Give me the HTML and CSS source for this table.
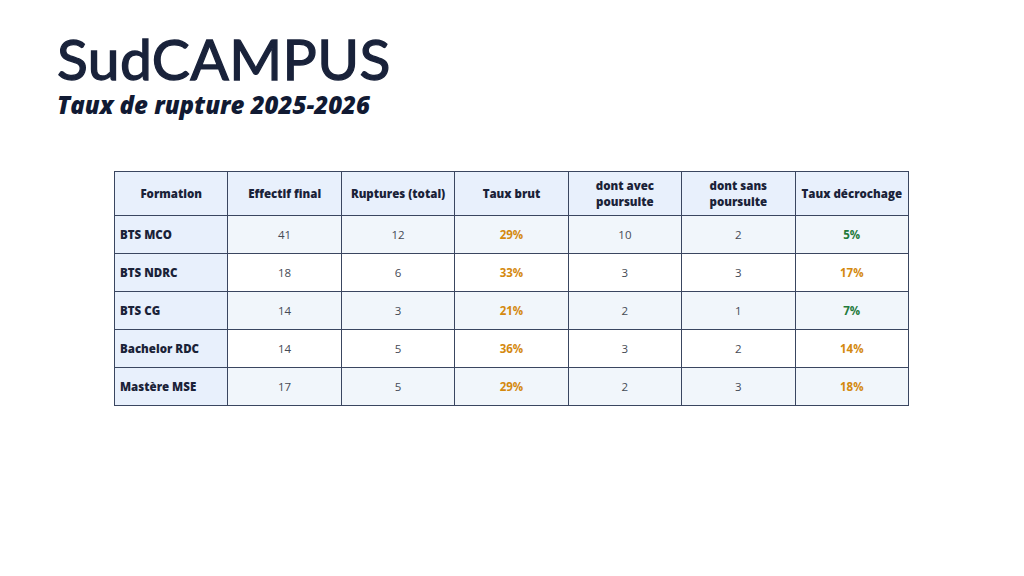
FILE: index.html
```html
<!DOCTYPE html>
<html lang="fr">
<head>
<meta charset="utf-8">
<title>SudCAMPUS - Taux de rupture</title>
<link rel="stylesheet" href="styles.css">
</head>
<body>
<div class="page">
  <header class="brand">
    <div class="logo">SudCAMPUS</div>
    <h1 class="subtitle">Taux de rupture 2025-2026</h1>
  </header>
  <table class="rates">
    <thead>
      <tr>
        <th>Formation</th>
        <th>Effectif final</th>
        <th>Ruptures (total)</th>
        <th>Taux brut</th>
        <th>dont avec<br>poursuite</th>
        <th>dont sans<br>poursuite</th>
        <th>Taux décrochage</th>
      </tr>
    </thead>
    <tbody>
      <tr><td class="name">BTS MCO</td><td>41</td><td>12</td><td class="warn">29%</td><td>10</td><td>2</td><td class="good">5%</td></tr>
      <tr><td class="name">BTS NDRC</td><td>18</td><td>6</td><td class="warn">33%</td><td>3</td><td>3</td><td class="warn">17%</td></tr>
      <tr><td class="name">BTS CG</td><td>14</td><td>3</td><td class="warn">21%</td><td>2</td><td>1</td><td class="good">7%</td></tr>
      <tr><td class="name">Bachelor RDC</td><td>14</td><td>5</td><td class="warn">36%</td><td>3</td><td>2</td><td class="warn">14%</td></tr>
      <tr><td class="name">Mastère MSE</td><td>17</td><td>5</td><td class="warn">29%</td><td>2</td><td>3</td><td class="warn">18%</td></tr>
    </tbody>
  </table>
</div>
</body>
</html>
```
FILE: styles.css
```css
html, body {
  margin: 0;
  padding: 0;
  background: #ffffff;
}
.page {
  width: 1024px;
  height: 576px;
  box-sizing: border-box;
  padding: 32px 0 0 57px;
  font-family: "Open Sans", "Liberation Sans", sans-serif;
  color: #1a2238;
}
.brand {
  display: flex;
  flex-direction: column;
  gap: 7px;
}
.logo {
  font-family: "Lato", "Open Sans", sans-serif;
  font-weight: 400;
  font-size: 57px;
  line-height: 52px;
  color: #19223a;
  letter-spacing: 0.4px;
  -webkit-text-stroke: 1.3px #19223a;
}
.subtitle {
  margin: 0;
  font-family: "Open Sans", sans-serif;
  font-weight: 800;
  font-style: italic;
  font-size: 24px;
  line-height: 28px;
  color: #111a33;
}
.rates {
  margin: 52px 0 0 57px;
  border-collapse: collapse;
  border: 1.5px solid #1d2a45;
  font-size: 11.5px;
  table-layout: fixed;
  width: 795px;
}
.rates th, .rates td {
  border: 1px solid #3a4660;
  text-align: center;
  vertical-align: middle;
  padding: 0 2px;
}
.rates th {
  height: 43px;
  background: #e8f0fc;
  font-weight: 800;
  line-height: 16px;
  color: #1a2238;
}
.rates td {
  height: 37px;
  color: #454a55;
}
.rates tbody tr:nth-child(odd) td {
  background: #f1f6fb;
}
.rates tbody tr:nth-child(even) td {
  background: #ffffff;
}
.rates tbody tr td.name {
  background: #e8f0fc;
  text-align: left;
  font-weight: 800;
  color: #1a2238;
  padding-left: 5px;
}
.rates td.warn {
  color: #d4890f;
  font-weight: 700;
}
.rates td.good {
  color: #237a3b;
  font-weight: 700;
}
```
